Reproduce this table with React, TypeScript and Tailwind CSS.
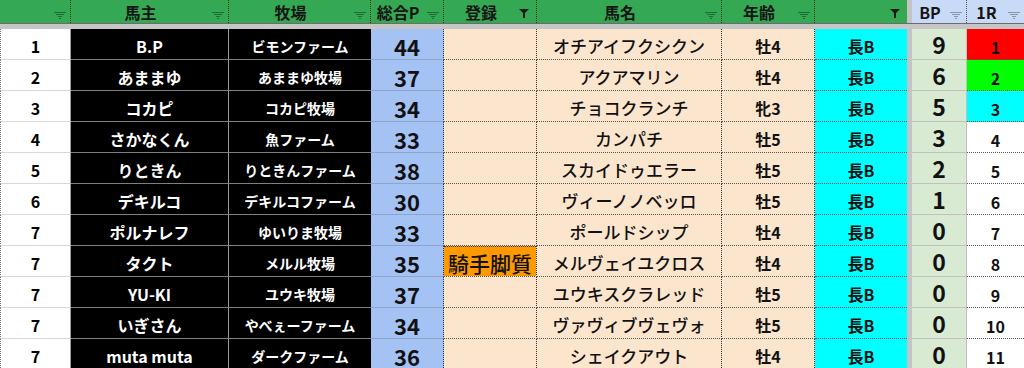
import React from "react";

const GRID =
  "grid grid-cols-[71px_158px_142px_73px_93px_185px_93px_92px_5px_55px_57px]";

type Row = {
  a: string;
  b: string;
  c: string;
  d: string;
  e: string;
  f: string;
  g: string;
  h: string;
  bp: string;
  r1: string;
  r1bg?: string;
};

const rows: Row[] = [
  { a: "1", b: "B.P", c: "ビモンファーム", d: "44", e: "", f: "オチアイフクシクン", g: "牡4", h: "長B", bp: "9", r1: "1", r1bg: "bg-[#ff0000]" },
  { a: "2", b: "あままゆ", c: "あままゆ牧場", d: "37", e: "", f: "アクアマリン", g: "牡4", h: "長B", bp: "6", r1: "2", r1bg: "bg-[#00ff00]" },
  { a: "3", b: "コカピ", c: "コカピ牧場", d: "34", e: "", f: "チョコクランチ", g: "牝3", h: "長B", bp: "5", r1: "3", r1bg: "bg-[#00ffff]" },
  { a: "4", b: "さかなくん", c: "魚ファーム", d: "33", e: "", f: "カンパチ", g: "牡5", h: "長B", bp: "3", r1: "4" },
  { a: "5", b: "りときん", c: "りときんファーム", d: "38", e: "", f: "スカイドゥエラー", g: "牡5", h: "長B", bp: "2", r1: "5" },
  { a: "6", b: "デキルコ", c: "デキルコファーム", d: "30", e: "", f: "ヴィーノノベッロ", g: "牡5", h: "長B", bp: "1", r1: "6" },
  { a: "7", b: "ポルナレフ", c: "ゆいりま牧場", d: "33", e: "", f: "ポールドシップ", g: "牡4", h: "長B", bp: "0", r1: "7" },
  { a: "7", b: "タクト", c: "メルル牧場", d: "35", e: "騎手脚質", f: "メルヴェイユクロス", g: "牡4", h: "長B", bp: "0", r1: "8" },
  { a: "7", b: "YU-KI", c: "ユウキ牧場", d: "37", e: "", f: "ユウキスクラレッド", g: "牡5", h: "長B", bp: "0", r1: "9" },
  { a: "7", b: "いぎさん", c: "やべぇーファーム", d: "34", e: "", f: "ヴァヴィブヴェヴォ", g: "牡5", h: "長B", bp: "0", r1: "10" },
  { a: "7", b: "muta muta", c: "ダークファーム", d: "36", e: "", f: "シェイクアウト", g: "牡4", h: "長B", bp: "0", r1: "11" },
];

function FilterIcon({ color }: { color: string }) {
  return (
    <svg width="12" height="7" viewBox="0 0 12 7" className="absolute right-[4px] top-[12px]">
      <rect x="0" y="0" width="12" height="1" fill={color} />
      <rect x="2" y="2" width="8" height="1" fill={color} />
      <rect x="4" y="4" width="4" height="1" fill={color} />
      <rect x="5" y="6" width="2" height="1" fill={color} />
    </svg>
  );
}

function ActiveFilter() {
  return (
    <svg width="10" height="9" viewBox="0 0 10 9" className="absolute right-[7px] top-[9px]">
      <path d="M0 0 H10 L6 4 V9 H4 V4 Z" fill="#1a1a1a" />
    </svg>
  );
}

function HeadCell({
  label,
  active,
  blue,
  last,
}: {
  label: string;
  active?: boolean;
  blue?: boolean;
  last?: boolean;
}) {
  return (
    <div
      className={
        "relative h-[23px] flex items-center justify-center pr-[18px] text-[16px] font-bold text-[#151515] " +
        (blue ? "bg-[#c9daf8] " : "bg-[#34a853] ") +
        (last ? "" : "border-r border-dotted border-r-[#1c3a25]")
      }
    >
      <span className="leading-[20px]">{label}</span>
      {active ? <ActiveFilter /> : <FilterIcon color={blue ? "#8797a8" : "#1f6b38"} />}
    </div>
  );
}

const cell = "h-[31px] flex items-center justify-center pt-[4px] leading-[24px] whitespace-nowrap";

export default function App() {
  return (
    <div
      className="w-[1024px] h-[368px] overflow-hidden bg-white"
      style={{ fontFamily: '"Noto Sans CJK JP", "Noto Sans", sans-serif' }}
    >
      <div className={GRID}>
        <HeadCell label="" />
        <HeadCell label="馬主" />
        <HeadCell label="牧場" />
        <HeadCell label="総合P" />
        <HeadCell label="登録" active />
        <HeadCell label="馬名" />
        <HeadCell label="年齢" />
        <div className="relative h-[23px] bg-[#34a853]">
          <ActiveFilter />
        </div>
        <div className="h-[23px] bg-[#c4c4c4]" />
        <div className="relative h-[23px] flex items-center justify-center pr-[18px] text-[16px] font-bold text-[#151515] bg-[#c9daf8] border-r border-dotted border-r-[#555]">
          <span className="leading-[20px]">BP</span>
          <FilterIcon color="#8797a8" />
        </div>
        <HeadCell label="1R" blue last />
      </div>
      <div className="h-[6px] border-t border-[#6b6b6b] bg-[#c6c6c6]" />
      {rows.map((r, i) => (
        <div key={i} className={GRID}>
          <div className={cell + " bg-white text-black font-bold text-[16px] border-r border-r-[#9e9e9e] border-b border-b-[#d9d9d9] border-l border-dotted border-l-[#777] [border-right-style:solid] [border-bottom-style:solid]"}>
            {r.a}
          </div>
          <div className={cell + " bg-black text-white font-bold text-[16px] border-r border-r-[#9a9a9a] border-b border-b-[#7f7f7f]"}>
            {r.b}
          </div>
          <div className={cell + " bg-black text-white font-bold text-[14px] border-b border-b-[#7f7f7f]"}>
            {r.c}
          </div>
          <div className={cell + " bg-[#a4c2f4] text-[#111] font-bold text-[22px] pt-[2px] border-r border-dotted border-r-[#333] border-b border-b-[#8ea5c8] [border-bottom-style:solid]"}>
            {r.d}
          </div>
          <div className={"h-[31px] bg-[#fce5cd] border-r border-b border-dotted border-r-[#333] border-b-[#555]"}>
            {r.e ? (
              <div className="h-full flex items-center justify-center bg-[#ff9900] text-[#111] text-[21px] font-medium leading-[24px] whitespace-nowrap pt-[2px] border-t border-dotted border-t-[#333]">
                {r.e}
              </div>
            ) : null}
          </div>
          <div className={cell + " bg-[#fce5cd] text-[#111] font-medium text-[17px] border-r border-b border-dotted border-r-[#333] border-b-[#555]"}>
            {r.f}
          </div>
          <div className={cell + " bg-[#fce5cd] text-[#111] font-bold text-[16px] border-r border-b border-dotted border-r-[#333] border-b-[#555]"}>
            {r.g}
          </div>
          <div className={cell + " bg-[#00ffff] text-[#111] font-bold text-[16px] border-b border-dotted border-b-[#555]"}>
            {r.h}
          </div>
          <div className="h-[31px] bg-[#c4c4c4]" />
          <div className={"h-[31px] flex items-center justify-center leading-[26px] whitespace-nowrap bg-[#d9ead3] text-[#111] font-bold text-[23px] border-r border-r-[#c0c0c0] border-b border-b-[#c0c0c0]"}>
            {r.bp}
          </div>
          <div className={cell + " " + (r.r1bg ?? "bg-white") + " text-[#111] font-bold text-[16px] pt-[6px] leading-[20px] border-b border-dotted border-b-[#555]"}>
            {r.r1}
          </div>
        </div>
      ))}
    </div>
  );
}
